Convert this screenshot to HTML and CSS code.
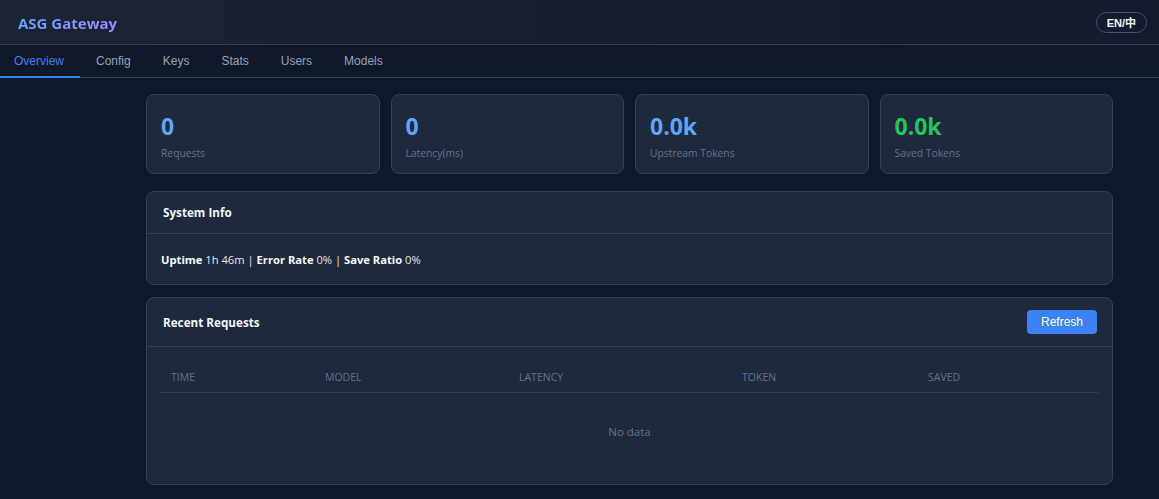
FILE: index.html
```html
<!DOCTYPE html>
<html lang="en">
<head>
    <meta charset="UTF-8">
    <meta name="viewport" content="width=device-width, initial-scale=1.0">
    <title>ASG Gateway</title>
    <link rel="stylesheet" href="styles.css">
</head>
<body>
    <header class="header">
        <h1 class="logo">ASG Gateway</h1>
        <button class="lang-btn">EN/中</button>
    </header>

    <nav class="tabs">
        <div class="tab active">Overview</div>
        <div class="tab">Config</div>
        <div class="tab">Keys</div>
        <div class="tab">Stats</div>
        <div class="tab">Users</div>
        <div class="tab">Models</div>
    </nav>

    <main class="content">
        <div class="stats">
            <div class="stat-card">
                <div class="stat-value">0</div>
                <div class="stat-label">Requests</div>
            </div>
            <div class="stat-card">
                <div class="stat-value">0</div>
                <div class="stat-label">Latency(ms)</div>
            </div>
            <div class="stat-card">
                <div class="stat-value">0.0k</div>
                <div class="stat-label">Upstream Tokens</div>
            </div>
            <div class="stat-card">
                <div class="stat-value green">0.0k</div>
                <div class="stat-label">Saved Tokens</div>
            </div>
        </div>

        <section class="card">
            <div class="card-header">
                <h3>System Info</h3>
            </div>
            <div class="card-body info">
                <b>Uptime</b> 1h 46m | <b>Error Rate</b> 0% | <b>Save Ratio</b> 0%
            </div>
        </section>

        <section class="card">
            <div class="card-header">
                <h3>Recent Requests</h3>
                <button class="btn">Refresh</button>
            </div>
            <div class="card-body">
                <table>
                    <thead>
                        <tr>
                            <th class="col-time">Time</th>
                            <th class="col-model">Model</th>
                            <th class="col-latency">Latency</th>
                            <th class="col-token">Token</th>
                            <th>Saved</th>
                        </tr>
                    </thead>
                    <tbody>
                        <tr>
                            <td colspan="5" class="empty">No data</td>
                        </tr>
                    </tbody>
                </table>
            </div>
        </section>
    </main>
</body>
</html>
```

FILE: styles.css
```css
body {
    margin: 0;
    background-color: #0f172a;
    color: #e2e8f0;
    font-family: "Open Sans", "Noto Sans CJK SC", sans-serif;
}

.header {
    height: 44px;
    display: flex;
    align-items: center;
    justify-content: space-between;
    padding: 0 12px 0 18px;
    background: linear-gradient(90deg, #1c2334, #141b2c);
    border-bottom: 1px solid #334155;
}

.logo {
    margin: 1px 0 0;
    font-size: 15px;
    font-weight: 700;
    background: linear-gradient(90deg, #60a5fa, #a78bfa);
    -webkit-background-clip: text;
    background-clip: text;
    color: transparent;
}

.lang-btn {
    height: 21px;
    padding: 0 10px;
    background: transparent;
    border: 1px solid #475569;
    border-radius: 11px;
    color: #f1f5f9;
    font-family: "Liberation Sans", "Noto Sans CJK SC", sans-serif;
    font-size: 11px;
    font-weight: 700;
}

.tabs {
    display: flex;
    height: 32px;
    background-color: #111827;
    border-bottom: 1px solid #334155;
}

.tab {
    display: flex;
    align-items: center;
    padding: 0 16px;
    font-family: "Liberation Sans", sans-serif;
    font-size: 12px;
    color: #94a3b8;
    border-bottom: 2px solid transparent;
    margin-bottom: -1px;
}

.tab:first-child {
    padding-left: 14px;
}

.tab.active {
    color: #3b82f6;
    border-bottom-color: #3b82f6;
}

.content {
    padding: 16px 46px 20px 146px;
}

.stats {
    display: grid;
    grid-template-columns: repeat(4, 1fr);
    gap: 11px;
    margin-bottom: 17px;
}

.stat-card {
    background-color: #1e293b;
    border: 1px solid #334155;
    border-radius: 8px;
    padding: 15px 14px 12px;
}

.stat-value {
    font-size: 23px;
    font-weight: 700;
    line-height: 32px;
    color: #60a5fa;
}

.stat-value.green {
    color: #22c55e;
}

.stat-label {
    margin-top: 3px;
    font-size: 10.3px;
    line-height: 16px;
    color: #64748b;
}

.card {
    background-color: #1e293b;
    border: 1px solid #334155;
    border-radius: 8px;
    margin-bottom: 12px;
}

.card-header {
    display: flex;
    align-items: center;
    justify-content: space-between;
    min-height: 17px;
    padding: 12px 15px 12px 16px;
    border-bottom: 1px solid #334155;
}

.card-header h3 {
    margin: 0;
    font-size: 11.7px;
    font-weight: 700;
    line-height: 17px;
    color: #f1f5f9;
}

.card-body {
    padding: 15px 14px 12px;
}

.card-body.info {
    padding: 17px 14px 16px;
    font-size: 11.2px;
    line-height: 17px;
}

.card-body b {
    color: #f8fafc;
}

.btn {
    height: 24px;
    padding: 0 14px;
    background-color: #3b82f6;
    color: white;
    border: none;
    border-radius: 4px;
    font-family: "Liberation Sans", sans-serif;
    font-size: 12px;
}

table {
    width: 100%;
    border-collapse: collapse;
}

th {
    text-align: left;
    padding: 8px 10px;
    font-size: 10.5px;
    font-weight: 400;
    line-height: 14px;
    text-transform: uppercase;
    color: #64748b;
    border-bottom: 1px solid #334155;
}

.col-time { width: 134px; }
.col-model { width: 174px; }
.col-latency { width: 203px; }
.col-token { width: 166px; }

.empty {
    text-align: center;
    padding: 31px 10px 32px;
    font-size: 11.5px;
    line-height: 16px;
    color: #64748b;
}
```
